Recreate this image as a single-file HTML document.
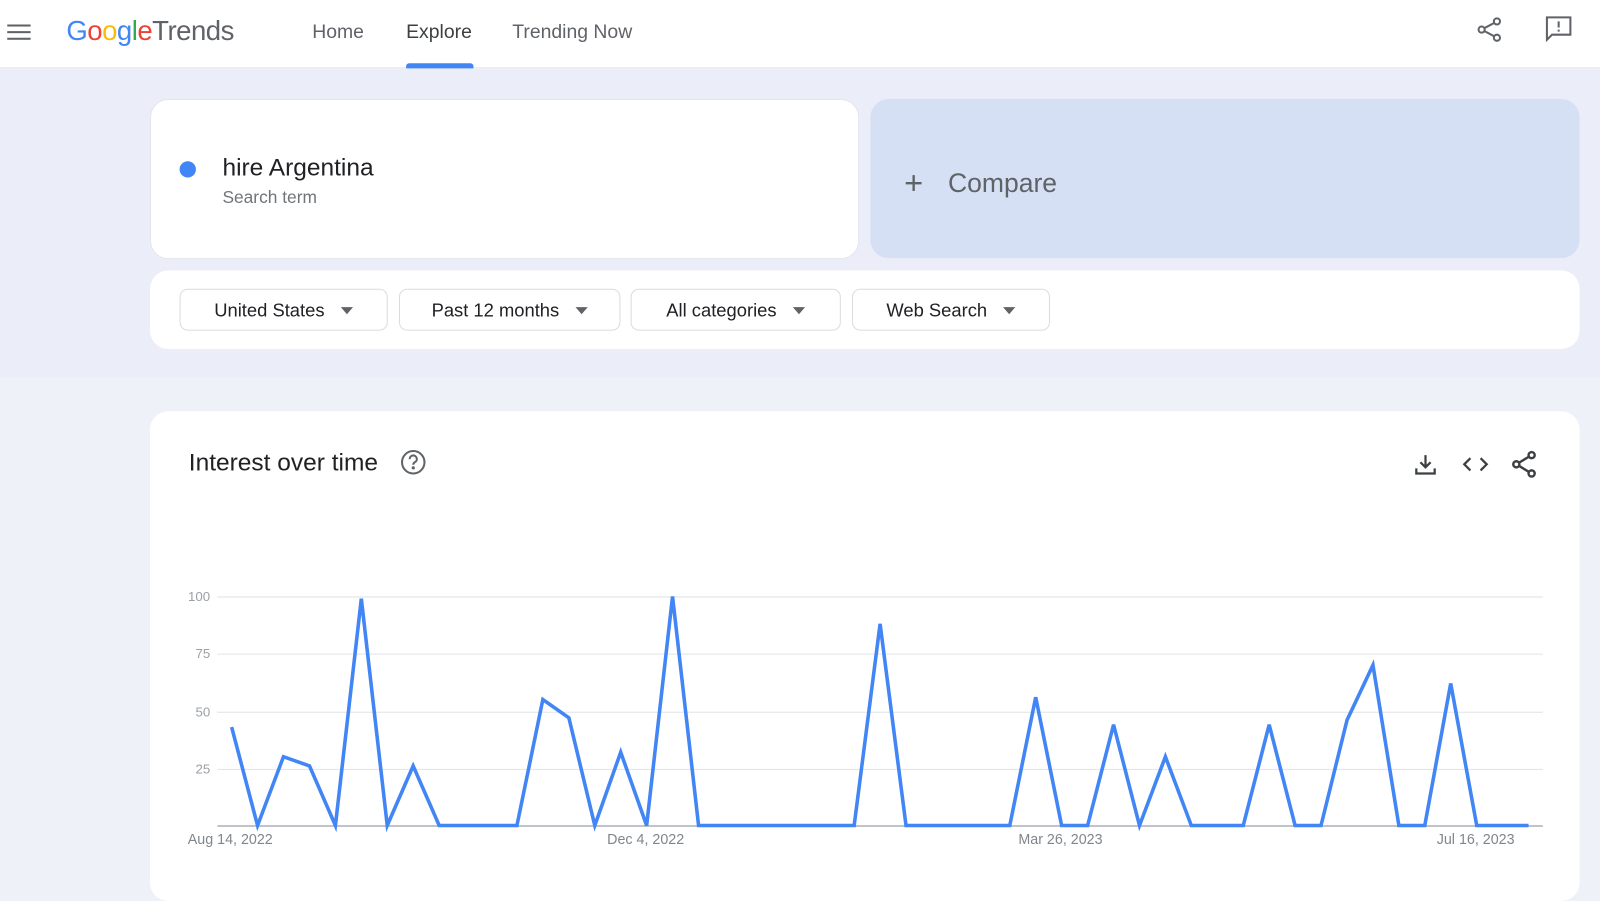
<!DOCTYPE html>
<html><head><meta charset="utf-8"><style>
html,body{margin:0;padding:0;width:1600px;height:889px;overflow:hidden;background:#eef1f8;font-family:"Liberation Sans",Arial,sans-serif}
#w{position:absolute;left:0;top:0;width:1568px;height:872px;transform:scale(1.0204);transform-origin:0 0;background:#eef1f8}
.a{position:absolute}
.hdr{left:0;top:0;width:1568px;height:66px;background:#fff;border-bottom:1px solid #e3e5ea}
.nav{top:21px;font-size:19px;color:#5f6368}
.card{background:#fff;border-radius:18px}
.btn{position:absolute;top:283px;height:41px;border:1px solid #dadce0;border-radius:8px;background:#fff;font-size:18px;color:#202124;box-sizing:border-box;text-align:center;line-height:40px}
.tri{display:inline-block;width:0;height:0;border-left:6px solid transparent;border-right:6px solid transparent;border-top:7px solid #5f6368;margin-left:16px;vertical-align:2px}
.yl{font-size:13px;color:#9aa0a6;text-align:right;width:30px;left:176px}
.xl{font-size:14px;color:#80868b;top:814px}
</style></head><body><div id="w">
<div class="a" style="left:0;top:68px;width:1568px;height:302px;background:#ebeef8"></div>
<div class="a hdr"></div>
<svg class="a" style="left:7px;top:22px" width="24" height="20"><g fill="#5f6368"><rect x="0" y="2" width="23" height="2"/><rect x="0" y="8.5" width="23" height="2"/><rect x="0" y="15" width="23" height="2"/></g></svg>
<div class="a" style="left:65px;top:15px;font-size:27px;letter-spacing:-0.5px"><span style="color:#4285f4">G</span><span style="color:#ea4335">o</span><span style="color:#fbbc05">o</span><span style="color:#4285f4">g</span><span style="color:#34a853">l</span><span style="color:#ea4335">e</span><span style="color:#5f6368">Trends</span></div>
<div class="a nav" style="left:306px">Home</div>
<div class="a nav" style="left:398px;color:#3c4043">Explore</div>
<div class="a" style="left:398px;top:62px;width:66px;height:5px;background:#4285f4;border-radius:3px 3px 0 0"></div>
<div class="a nav" style="left:502px">Trending Now</div>
<svg class="a" style="left:1447px;top:16px" width="26" height="26" viewBox="0 0 26 26" fill="none" stroke="#5f6368" stroke-width="2"><circle cx="20" cy="5" r="3"/><circle cx="5" cy="13" r="3"/><circle cx="20" cy="21" r="3"/><path d="M7.6 11.6 17.4 6.4M7.6 14.4 17.4 19.6"/></svg>
<svg class="a" style="left:1514px;top:15px" width="27" height="26" viewBox="0 0 27 26" fill="none" stroke="#5f6368" stroke-width="2"><path d="M2 2H25V19H7L2 24Z"/><path d="M13.5 6v6M13.5 14v2"/></svg>

<div class="a card" style="left:147px;top:97px;width:695px;height:157px;border:1px solid #e3e6ee;box-sizing:border-box"></div>
<div class="a" style="left:176px;top:158px;width:16px;height:16px;border-radius:50%;background:#4285f4"></div>
<div class="a" style="left:218px;top:151px;font-size:24px;color:#202124">hire Argentina</div>
<div class="a" style="left:218px;top:184px;font-size:17px;color:#70757a">Search term</div>
<div class="a" style="left:853px;top:97px;width:695px;height:156px;background:#d5e0f5;border-radius:18px"></div>
<div class="a" style="left:886px;top:161px;font-size:32px;color:#5f6368;font-weight:300">+</div>
<div class="a" style="left:929px;top:164px;font-size:26px;color:#5f6368">Compare</div>

<div class="a card" style="left:147px;top:265px;width:1401px;height:77px"></div>
<div class="btn" style="left:176px;width:204px">United States<span class="tri"></span></div>
<div class="btn" style="left:391px;width:217px">Past 12 months<span class="tri"></span></div>
<div class="btn" style="left:618px;width:206px">All categories<span class="tri"></span></div>
<div class="btn" style="left:835px;width:194px">Web Search<span class="tri"></span></div>

<div class="a card" style="left:147px;top:403px;width:1401px;height:480px"></div>
<div class="a" style="left:185px;top:440px;font-size:24px;color:#202124">Interest over time</div>
<svg class="a" style="left:392px;top:440px" width="26" height="26" viewBox="0 0 26 26" fill="none" stroke="#5f6368" stroke-width="2"><circle cx="13" cy="13" r="11"/><path d="M9.5 10a3.5 3.5 0 1 1 5 3c-1 .6-1.5 1.2-1.5 2.5" stroke-width="2"/><circle cx="13" cy="18.5" r="0.6" fill="#5f6368"/></svg>
<svg class="a" style="left:1385px;top:443px" width="24" height="24" viewBox="0 0 24 24" fill="none" stroke="#3c4043" stroke-width="2.2"><path d="M12 3v12M7 10l5 5 5-5M3 16v5h18v-5"/></svg>
<svg class="a" style="left:1433px;top:443px" width="26" height="24" viewBox="0 0 26 24" fill="none" stroke="#3c4043" stroke-width="2.2"><path d="M8 6 2 12l6 6M18 6l6 6-6 6"/></svg>
<svg class="a" style="left:1481px;top:441px" width="26" height="28" viewBox="0 0 26 28" fill="none" stroke="#3c4043" stroke-width="2.4"><circle cx="20" cy="5" r="3"/><circle cx="5" cy="14" r="3"/><circle cx="20" cy="23" r="3"/><path d="M7.6 12.5 17.4 6.5M7.6 15.5 17.4 21.5"/></svg>

<svg class="a" style="left:0;top:0" width="1568" height="872">
<g stroke="#e2e3e6" stroke-width="1"><line x1="213" y1="585" x2="1512" y2="585"/><line x1="213" y1="641" x2="1512" y2="641"/><line x1="213" y1="698" x2="1512" y2="698"/><line x1="213" y1="754" x2="1512" y2="754"/></g>
<line x1="213" y1="809.5" x2="1512" y2="809.5" stroke="#9aa0a6" stroke-width="1.2"/>
<polyline fill="none" stroke="#4285f4" stroke-width="3.5" stroke-linejoin="miter" points="227,712.5 252.4,809 277.8,741.6 303.3,750.6 328.7,809 354.1,586.7 379.5,809 404.9,750.6 430.4,809 506.6,809 532,685.5 557.5,703.5 582.9,809 608.3,737.2 633.7,809 659.1,584.5 684.6,809 837.1,809 862.5,611.4 887.9,809 989.6,809 1015,683.3 1040.4,809 1065.9,809 1091.3,710.2 1116.7,809 1142.1,741.6 1167.5,809 1218.4,809 1243.8,710.2 1269.2,809 1294.6,809 1320.1,705.7 1345.5,651.8 1370.9,809 1396.3,809 1421.7,669.8 1447.2,809 1498,809"/>
</svg>
<div class="a yl" style="top:577px">100</div>
<div class="a yl" style="top:633px">75</div>
<div class="a yl" style="top:690px">50</div>
<div class="a yl" style="top:746px">25</div>
<div class="a xl" style="left:184px">Aug 14, 2022</div>
<div class="a xl" style="left:595px">Dec 4, 2022</div>
<div class="a xl" style="left:998px">Mar 26, 2023</div>
<div class="a xl" style="left:1408px">Jul 16, 2023</div>
</div></body></html>
